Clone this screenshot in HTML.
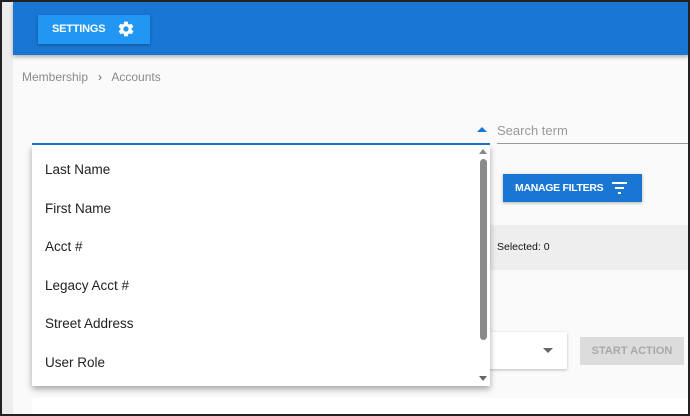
<!DOCTYPE html><html><head><style>
*{margin:0;padding:0;box-sizing:border-box}
body{width:690px;height:416px;overflow:hidden;background:#fafafa;font-family:"Liberation Sans",sans-serif;position:relative}
.a{position:absolute}
</style></head><body>
<div class="a" style="left:0;top:0;width:690px;height:416px;border:2px solid #222;z-index:50;pointer-events:none"></div>
<div class="a" style="left:2px;top:2px;width:11px;height:412px;background:#eeeeee"></div>
<div class="a" style="left:13px;top:2px;width:676px;height:53px;background:#1976d2;box-shadow:0 2px 4px rgba(0,0,0,.3)"></div>
<div class="a" style="left:38px;top:15px;width:112px;height:29px;background:#2196f3;box-shadow:0 1px 3px rgba(0,0,0,.3);color:#fff;font-weight:bold;font-size:11px;line-height:29px;padding-left:14px;letter-spacing:-0.2px">SETTINGS
<svg class="a" style="left:79px;top:5px" width="18" height="18" viewBox="0 0 24 24"><path fill="#fff" d="M19.4 13c0-.3.1-.6.1-1s0-.7-.1-1l2.1-1.6c.2-.2.2-.4.1-.6l-2-3.5c-.1-.2-.4-.3-.6-.2l-2.5 1c-.5-.4-1.1-.7-1.700-1l-.4-2.6c0-.3-.2-.4-.5-.4h-4c-.2 0-.5.2-.5.4l-.4 2.6c-.6.3-1.2.6-1.7 1l-2.5-1c-.2-.1-.5 0-.6.2l-2 3.5c-.1.2-.1.5.1.6L4.6 11c0 .3-.1.7-.1 1s0 .7.1 1l-2.1 1.6c-.2.2-.2.4-.1.6l2 3.5c.1.2.4.3.6.2l2.5-1c.5.4 1.1.7 1.7 1l.4 2.6c0 .2.2.4.5.4h4c.2 0 .5-.2.5-.4l.4-2.6c.6-.3 1.2-.6 1.7-1l2.5 1c.2.1.5 0 .6-.2l2-3.5c.1-.2.1-.5-.1-.6L19.4 13zM12 15.5c-1.9 0-3.5-1.6-3.5-3.5s1.6-3.5 3.5-3.5 3.5 1.6 3.5 3.5-1.6 3.5-3.5 3.5z"/></svg></div>
<div class="a" style="left:22px;top:70px;font-size:12px;color:#8a8a8a">Membership &nbsp;&nbsp;<span style="color:#666">›</span>&nbsp;&nbsp; Accounts</div>
<div class="a" style="left:32px;top:143px;width:458px;height:2px;background:#1976d2"></div>
<svg class="a" style="left:477px;top:127px" width="10" height="6"><path d="M0 5L5 0L10 5Z" fill="#1976d2"/></svg>
<div class="a" style="left:497px;top:123px;font-size:13px;color:#999">Search term</div>
<div class="a" style="left:497px;top:143px;width:192px;height:1px;background:#999"></div>
<div class="a" style="left:503px;top:174px;width:139px;height:28px;background:#1976d2;box-shadow:0 1px 3px rgba(0,0,0,.3);color:#fff;font-weight:bold;font-size:10.5px;line-height:28px;padding-left:12px;letter-spacing:-0.3px">MANAGE FILTERS
<svg class="a" style="left:109px;top:8px" width="15" height="12"><path d="M0 1h15M3 6h9M6 11h3" stroke="#fff" stroke-width="2"/></svg></div>
<div class="a" style="left:490px;top:225px;width:199px;height:45px;background:#eeeeee"></div>
<div class="a" style="left:497px;top:241px;font-size:10.5px;color:#111">Selected: 0</div>
<div class="a" style="left:470px;top:332px;width:97px;height:37px;background:#fff;box-shadow:0 1px 3px rgba(0,0,0,.25)"></div>
<svg class="a" style="left:543px;top:348px" width="10" height="6"><path d="M0 0L5 5L10 0Z" fill="#666"/></svg>
<div class="a" style="left:580px;top:337px;width:104px;height:28px;background:#dcdcdc;color:#a8a8a8;font-weight:bold;font-size:11px;line-height:28px;text-align:center">START ACTION</div>
<div class="a" style="left:32px;top:398px;width:657px;height:16px;background:#fff"></div>
<div class="a" style="left:32px;top:145px;width:458px;height:241px;background:#fff;box-shadow:0 3px 6px rgba(0,0,0,.35);font-size:13.5px;color:#222">
<div class="a" style="left:13px;top:17px">Last Name</div>
<div class="a" style="left:13px;top:56px">First Name</div>
<div class="a" style="left:13px;top:94px">Acct #</div>
<div class="a" style="left:13px;top:133px">Legacy Acct #</div>
<div class="a" style="left:13px;top:171px">Street Address</div>
<div class="a" style="left:13px;top:210px">User Role</div>
<svg class="a" style="left:447px;top:4px" width="8" height="5"><path d="M0 5L4 0L8 5Z" fill="#888"/></svg>
<div class="a" style="left:448px;top:14px;width:7px;height:181px;background:#8a8a8a;border-radius:4px"></div>
<svg class="a" style="left:447px;top:231px" width="8" height="5"><path d="M0 0L4 5L8 0Z" fill="#666"/></svg>
</div>
</body></html>
